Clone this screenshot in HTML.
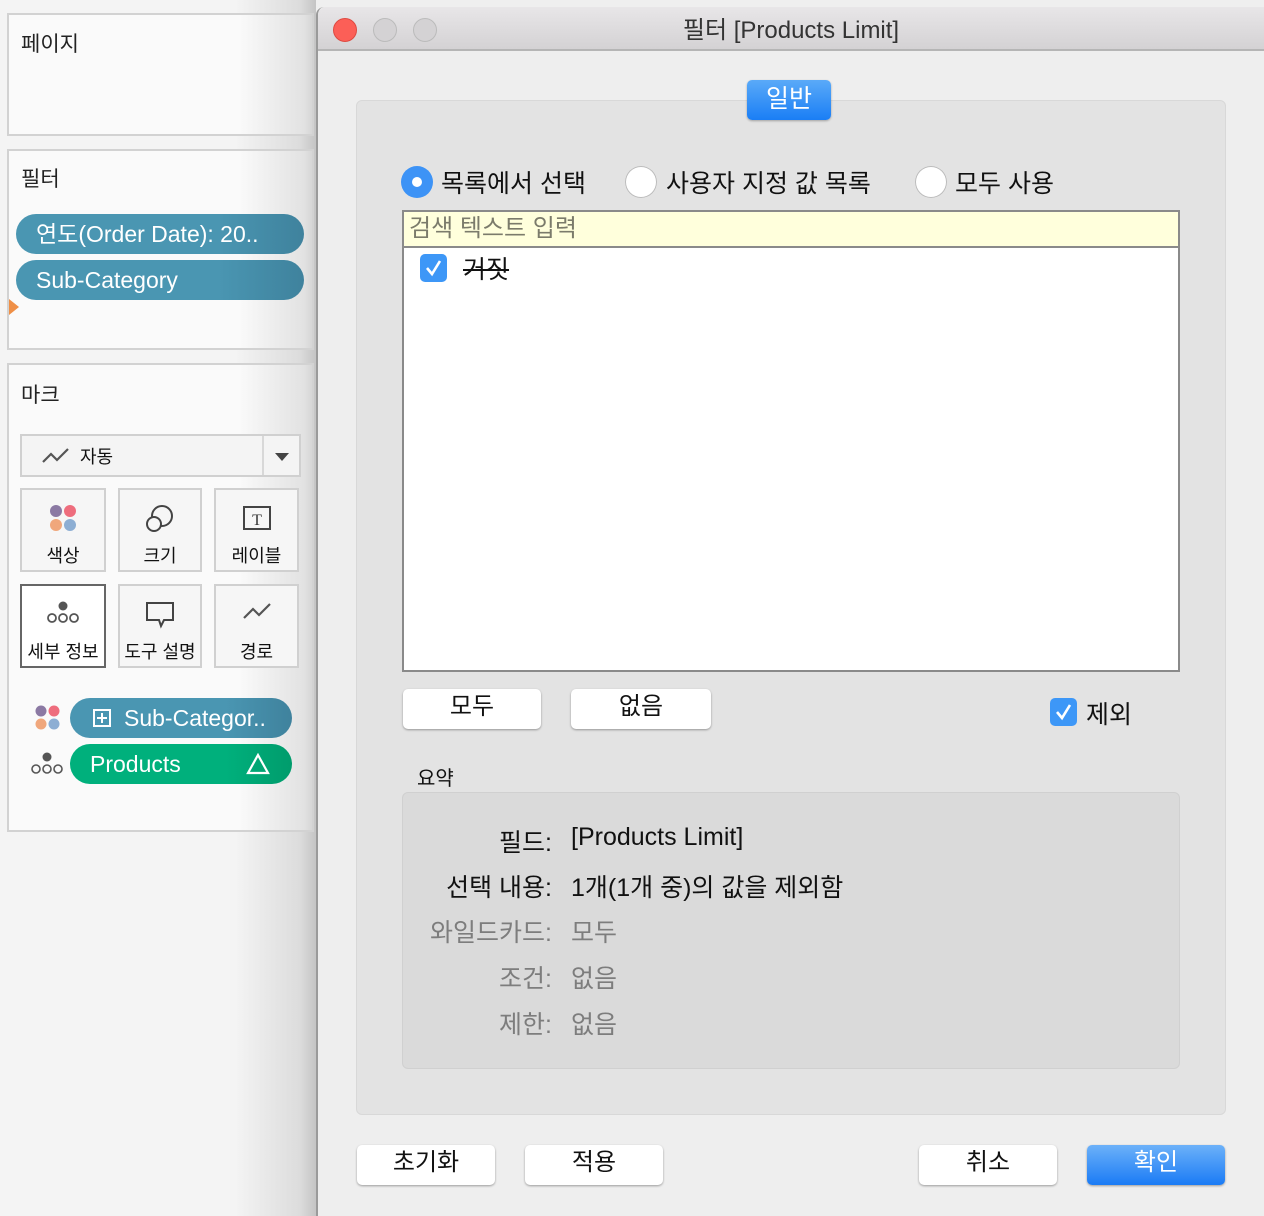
<!DOCTYPE html>
<html><head><meta charset="utf-8"><style>
*{box-sizing:border-box;margin:0;padding:0}
body{width:1264px;height:1216px;position:relative;overflow:hidden;background:#efefef;font-family:"Liberation Sans","Noto Sans CJK KR",sans-serif;color:#111}
.a{position:absolute}
.left{left:0;top:0;width:316px;height:1216px;background:linear-gradient(90deg,#f4f4f4 0,#f4f4f4 235px,#dcdcdc 300px,#c4c4c4 316px)}
.panel{position:absolute;left:7px;width:307px;border:2px solid #d2d2d2;background:linear-gradient(90deg,#fafafa 0,#fafafa 230px,#e2e2e2 295px,#d0d0d0 307px)}
.ptitle{position:absolute;left:12px;font-size:21px;color:#222}
.pill{position:absolute;height:40px;border-radius:20px;color:#fff;font-size:23px;line-height:40px;padding-left:20px;background:linear-gradient(90deg,#4a96b2 70%,#3f829d)}
.mb{position:absolute;width:86px;height:84px;border:2px solid #d0d0d0;background:#f6f6f6;text-align:center;font-size:18px}
.mb span{position:absolute;left:0;right:0;top:52px}
.mb svg{position:absolute;left:50%;top:14px;transform:translateX(-50%)}
.dlg{left:316px;top:7px;width:948px;height:1209px;background:#eeeeee;border-left:2px solid #9a9a9a;border-top-left-radius:8px}
.tb{position:absolute;left:0;top:0;right:0;height:44px;background:linear-gradient(#e8e6e8,#d4d2d4);border-bottom:2px solid #b5b5b5;border-top-left-radius:8px}
.dot{position:absolute;top:11px;width:24px;height:24px;border-radius:50%}
.btn{position:absolute;height:40px;background:#fff;border-radius:5px;box-shadow:0 1px 2px rgba(0,0,0,.35);font-size:24px;text-align:center;line-height:36px}
.radio{position:absolute;top:166px;width:32px;height:32px;border-radius:50%;background:#fff;box-shadow:0 0 0 1px #bbb inset}
.rl{position:absolute;top:164px;font-size:25px}
.chk{position:absolute;width:27px;height:28px;border-radius:5px;background:#3d97f7}
.lab{position:absolute;width:150px;left:402px;text-align:right;font-size:25px}
.val{position:absolute;left:571px;font-size:25px}
</style></head><body>
<div class="a" style="left:0;top:0;width:316px;height:8px;"><div class="a" style="left:160px;top:0;width:2px;height:8px;background:#ccc"></div></div>
<div class="a left"></div>
<div class="panel" style="top:13px;height:123px"><div class="ptitle" style="top:13px">페이지</div></div>
<div class="panel" style="top:149px;height:201px"><div class="ptitle" style="top:12px">필터</div>
<div class="pill" style="left:7px;top:63px;width:288px">연도(Order Date): 20..</div>
<div class="pill" style="left:7px;top:109px;width:288px">Sub-Category</div>
<div class="a" style="left:0;top:148px;width:0;height:0;border-top:8px solid transparent;border-bottom:8px solid transparent;border-left:10px solid #ef8f46"></div>
</div>
<div class="panel" style="top:363px;height:469px"><div class="ptitle" style="top:14px">마크</div>
<div class="a" style="left:11px;top:69px;width:281px;height:43px;border:2px solid #d0d0d0;background:#f4f4f4">
<svg class="a" style="left:19px;top:10px" width="30" height="20"><path d="M2 16 L10 8 L16 14 L27 3" stroke="#555" stroke-width="2.2" fill="none"/></svg>
<div class="a" style="left:58px;top:7px;font-size:18px">자동</div>
<div class="a" style="left:240px;top:0;width:2px;height:39px;background:#d8d8d8"></div>
<div class="a" style="left:253px;top:17px;border-left:7px solid transparent;border-right:7px solid transparent;border-top:8px solid #444"></div>
</div>
</div>
<div class="mb" style="left:20px;top:488px"><svg width="28" height="28"><circle cx="7" cy="7" r="6" fill="#8b79a3"/><circle cx="21" cy="7" r="6" fill="#ee6d7d"/><circle cx="7" cy="21" r="6" fill="#f0a77c"/><circle cx="21" cy="21" r="6" fill="#8daed3"/></svg><span>색상</span></div>
<div class="mb" style="left:118px;top:488px;width:84px"><svg width="32" height="30"><circle cx="18" cy="12" r="10" stroke="#444" stroke-width="2" fill="none"/><circle cx="10" cy="20" r="7" stroke="#444" stroke-width="2" fill="#f6f6f6"/></svg><span>크기</span></div>
<div class="mb" style="left:214px;top:488px;width:85px"><svg width="30" height="28"><rect x="2" y="3" width="26" height="22" stroke="#444" stroke-width="2" fill="none"/><text x="15" y="21" font-size="16" text-anchor="middle" font-family="Liberation Serif" fill="#333">T</text></svg><span>레이블</span></div>
<div class="mb" style="left:20px;top:584px;border-color:#666;background:#fff"><svg width="34" height="26"><circle cx="17" cy="6" r="4.5" fill="#555"/><circle cx="6" cy="18" r="4" stroke="#555" stroke-width="1.8" fill="none"/><circle cx="17" cy="18" r="4" stroke="#555" stroke-width="1.8" fill="none"/><circle cx="28" cy="18" r="4" stroke="#555" stroke-width="1.8" fill="none"/></svg><span>세부 정보</span></div>
<div class="mb" style="left:118px;top:584px;width:84px"><svg width="32" height="30"><path d="M3 3 H29 V20 H20 L17 26 L15 20 H3 Z" stroke="#444" stroke-width="2" fill="none"/></svg><span>도구 설명</span></div>
<div class="mb" style="left:214px;top:584px;width:85px"><svg width="30" height="24"><path d="M2 18 L11 9 L17 15 L28 4" stroke="#555" stroke-width="2.2" fill="none"/></svg><span>경로</span></div>
<svg class="a" style="left:35px;top:705px" width="26" height="26"><circle cx="6" cy="6" r="5.5" fill="#8b79a3"/><circle cx="19" cy="6" r="5.5" fill="#ee6d7d"/><circle cx="6" cy="19" r="5.5" fill="#f0a77c"/><circle cx="19" cy="19" r="5.5" fill="#8daed3"/></svg>
<svg class="a" style="left:31px;top:752px" width="34" height="24"><circle cx="16" cy="5" r="4.5" fill="#555"/><circle cx="5" cy="17" r="4" stroke="#555" stroke-width="1.6" fill="none"/><circle cx="16" cy="17" r="4" stroke="#555" stroke-width="1.6" fill="none"/><circle cx="27" cy="17" r="4" stroke="#555" stroke-width="1.6" fill="none"/></svg>
<div class="pill" style="left:70px;top:698px;width:222px;padding-left:54px">Sub-Categor..</div>
<svg class="a" style="left:93px;top:709px" width="18" height="18"><rect x="1" y="1" width="16" height="16" stroke="#fff" stroke-width="2" fill="none"/><path d="M9 4V14M4 9H14" stroke="#fff" stroke-width="2"/></svg>
<div class="pill" style="left:70px;top:744px;width:222px;background:linear-gradient(90deg,#00b07c 70%,#009c6c)">Products</div>
<svg class="a" style="left:246px;top:753px" width="24" height="22"><path d="M12 2 L22 20 H2 Z" stroke="#fff" stroke-width="2.2" fill="none"/></svg>

<div class="a dlg">
<div class="tb">
<div class="dot" style="left:15px;background:#fc5f57;border:1px solid #de4a41"></div>
<div class="dot" style="left:55px;background:#d4d2d4;border:1px solid #bbb"></div>
<div class="dot" style="left:95px;background:#d4d2d4;border:1px solid #bbb"></div>
<div class="a" style="left:0;right:0;top:3px;text-align:center;font-size:24px;color:#333">필터 [Products Limit]</div>
</div>
</div>
<div class="a" style="left:356px;top:100px;width:870px;height:1015px;background:#e3e3e3;border:1px solid #d8d8d8;border-radius:6px"></div>
<div class="a" style="left:747px;top:80px;width:84px;height:40px;border-radius:5px;background:linear-gradient(#5aaaf8,#1a7ef5);color:#fff;font-size:25px;text-align:center;line-height:38px;box-shadow:0 1px 2px rgba(0,0,0,.3)">일반</div>
<div class="radio" style="left:401px;background:#3d93f6;box-shadow:none"><div class="a" style="left:11px;top:11px;width:10px;height:10px;border-radius:50%;background:#fff"></div></div>
<div class="rl" style="left:441px">목록에서 선택</div>
<div class="radio" style="left:625px"></div><div class="rl" style="left:666px">사용자 지정 값 목록</div>
<div class="radio" style="left:915px"></div><div class="rl" style="left:955px">모두 사용</div>
<div class="a" style="left:402px;top:210px;width:778px;height:462px;background:#fff;border:2px solid #8a8a8a"></div>
<div class="a" style="left:404px;top:212px;width:774px;height:36px;background:#ffffdc;border-bottom:2px solid #8a8a8a;font-size:24px;color:#7b7b6b;padding-left:5px;line-height:34px">검색 텍스트 입력</div>
<div class="chk" style="left:420px;top:254px"><svg width="27" height="28"><path d="M7 14 L12 20 L20 7" stroke="#fff" stroke-width="2.6" fill="none"/></svg></div>
<div class="a" style="left:463px;top:250px;font-size:25px;text-decoration:line-through">거짓</div>
<div class="btn" style="left:403px;top:689px;width:138px">모두</div>
<div class="btn" style="left:571px;top:689px;width:140px">없음</div>
<div class="chk" style="left:1050px;top:698px"><svg width="27" height="28"><path d="M7 14 L12 20 L20 7" stroke="#fff" stroke-width="2.6" fill="none"/></svg></div>
<div class="a" style="left:1086px;top:695px;font-size:25px">제외</div>
<div class="a" style="left:417px;top:762px;font-size:20px">요약</div>
<div class="a" style="left:402px;top:792px;width:778px;height:277px;background:#dadada;border:1px solid #d0d0d0;border-radius:6px"></div>
<div class="lab" style="top:823px">필드:</div><div class="val" style="top:823px">[Products Limit]</div>
<div class="lab" style="top:868px">선택 내용:</div><div class="val" style="top:868px">1개(1개 중)의 값을 제외함</div>
<div class="lab" style="top:913px;color:#7d7d7d">와일드카드:</div><div class="val" style="top:913px;color:#7d7d7d">모두</div>
<div class="lab" style="top:959px;color:#7d7d7d">조건:</div><div class="val" style="top:959px;color:#7d7d7d">없음</div>
<div class="lab" style="top:1005px;color:#7d7d7d">제한:</div><div class="val" style="top:1005px;color:#7d7d7d">없음</div>
<div class="btn" style="left:357px;top:1145px;width:138px">초기화</div>
<div class="btn" style="left:525px;top:1145px;width:138px">적용</div>
<div class="btn" style="left:919px;top:1145px;width:138px">취소</div>
<div class="btn" style="left:1087px;top:1145px;width:138px;background:linear-gradient(#6cb1f9,#1a7bf5);color:#fff">확인</div>
</body></html>
